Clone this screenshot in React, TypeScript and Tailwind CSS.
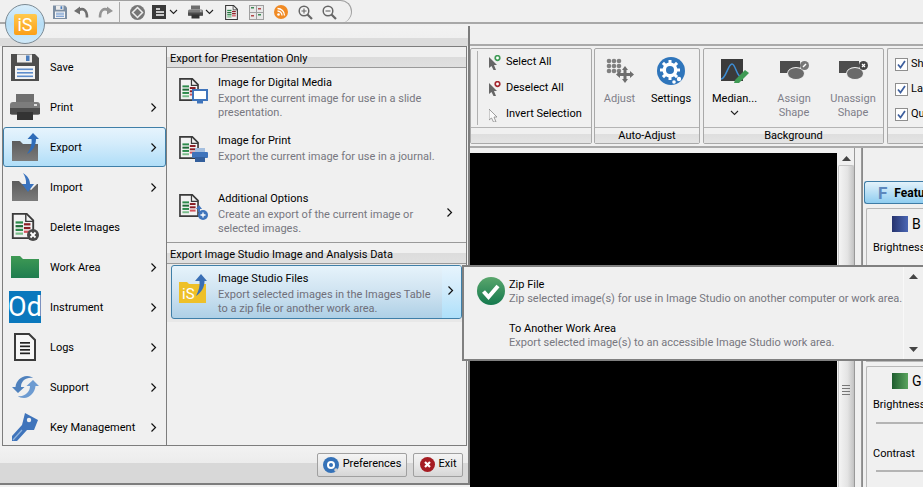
import React from "react";

const Chev = () => (
  <svg width="7" height="11" viewBox="0 0 7 11" className="shrink-0"><path d="M1.5 1.5L5.5 5.5L1.5 9.5" fill="none" stroke="#111" strokeWidth="1.2" /></svg>
);
const ChevDown = () => (
  <svg width="9" height="6" viewBox="0 0 9 6" className="shrink-0"><path d="M1 1L4.5 4.5L8 1" fill="none" stroke="#222" strokeWidth="1.1" /></svg>
);

const Floppy = ({ s = 28, dark = "#4e4e4e" }: { s?: number; dark?: string }) => (
  <svg width={s} height={s} viewBox="0 0 28 28">
    <path d="M0 1h24l4 4v23H0z" fill={dark} />
    <rect x="6" y="1.5" width="15" height="8" fill="#ececec" />
    <rect x="15" y="2.5" width="3.5" height="5.5" fill="#4a7dbd" />
    <rect x="4" y="13" width="20" height="13" fill="#f4f4f4" />
    <rect x="6" y="15.5" width="16" height="1.6" fill="#5d8ccb" />
    <rect x="6" y="19" width="16" height="1.6" fill="#5d8ccb" />
    <rect x="6" y="22.5" width="16" height="1.6" fill="#5d8ccb" />
  </svg>
);
const Printer = ({ w = 30, h = 26, c = "#4c4c4c" }: { w?: number; h?: number; c?: string }) => (
  <svg width={w} height={h} viewBox="0 0 30 26">
    <path d="M6 0h18v8H6z" fill="#6f6f6f" />
    <path d="M3 8h24q3 0 3 3v8q0 2-2 2H2q-2 0-2-2v-8q0-3 3-3z" fill="#7c7c7c" />
    <rect x="0" y="14" width="30" height="6" fill={c} />
    <rect x="7" y="18" width="16" height="8" fill="#333" />
    <rect x="24" y="10" width="3" height="2" fill="#ddd" />
  </svg>
);
const DocBars = ({ w = 24, h = 28 }: { w?: number; h?: number }) => (
  <svg width={w} height={h} viewBox="0 0 24 28">
    <path d="M1 1h15l7 7v19H1z" fill="#f2f2f2" stroke="#3a3a3a" strokeWidth="2" />
    <path d="M15 1v8h8" fill="none" stroke="#3a3a3a" strokeWidth="1.5" />
    <g fill="#2c8a4b"><rect x="4" y="9" width="8" height="2.4" /><rect x="4" y="13" width="8" height="2.4" fill="#1e6b37" /><rect x="4" y="17" width="8" height="2.4" /><rect x="4" y="21" width="8" height="2.4" fill="#7bbd8c" /></g>
    <g fill="#8a1d24"><rect x="13" y="11" width="7" height="2.4" /><rect x="13" y="15" width="7" height="2.4" /><rect x="13" y="19" width="7" height="2.4" fill="#d2545c" /></g>
  </svg>
);
const Folder = ({ fill = "#5c5c5c", notch = false }: { fill?: string; notch?: boolean }) => (
  <svg width="26" height="20" viewBox="0 0 26 20">
    <defs><linearGradient id={`f${notch ? "n" : "p"}`} x1="0" y1="0" x2="0" y2="1"><stop offset="0" stopColor={fill} /><stop offset="1" stopColor="#7b7b7b" /></linearGradient></defs>
    <path d={notch ? "M0 0h7l3 3h3l6 6 6-6h1v17H0z" : "M0 0h8l3 3h15v17H0z"} fill={`url(#f${notch ? "n" : "p"})`} />
  </svg>
);
const ExportIcon = () => (
  <div className="relative w-[26px] h-[28px]">
    <div className="absolute left-0 bottom-0 flex"><Folder /></div>
    <svg className="absolute left-[14px] top-0" width="13" height="22" viewBox="0 0 13 22">
      <path d="M7 0L13 6H10C10 12 7 18 1 21C5 15 6 11 5.500 6H1.500z" fill="#2f6cb8" />
    </svg>
  </div>
);
const ImportIcon = () => (
  <div className="relative w-[26px] h-[28px]">
    <div className="absolute left-0 bottom-0 flex"><Folder notch /></div>
    <svg className="absolute left-[9px] top-0" width="14" height="20" viewBox="0 0 14 20">
      <path d="M2 0C7 3 9 7 9 11H13L7 19L1 11H5C5.500 7 4 3 2 0z" fill="#3a73be" />
    </svg>
  </div>
);
const DeleteIcon = () => (
  <div className="relative w-[28px] h-[28px]">
    <DocBars w={24} h={26} />
    <svg className="absolute right-0 bottom-0" width="12" height="12" viewBox="0 0 12 12">
      <circle cx="6" cy="6" r="6" fill="#4a4a4a" />
      <path d="M3.500 3.500L8.500 8.500M8.500 3.500L3.500 8.500" stroke="#fff" strokeWidth="1.800" />
    </svg>
  </div>
);
const GreenFolder = () => (
  <svg width="28" height="22" viewBox="0 0 28 22">
    <defs><linearGradient id="gf" x1="0" y1="0" x2="0" y2="1"><stop offset="0" stopColor="#3f9a54" /><stop offset="1" stopColor="#1f7d50" /></linearGradient></defs>
    <path d="M0 0h9l3 3h16v19H0z" fill="url(#gf)" />
  </svg>
);
const OdIcon = () => (
  <div className="w-[32px] h-[32px] bg-[#0a78bd] text-white text-[27px] leading-[32px] flex items-center justify-center overflow-hidden">Od</div>
);
const LogsIcon = () => (
  <svg width="22" height="28" viewBox="0 0 22 28">
    <path d="M1 1h14l6 6v20H1z" fill="#f7f7f7" stroke="#3a3a3a" strokeWidth="2" />
    <g fill="#222"><rect x="6" y="9" width="10" height="1.700" /><rect x="6" y="12.500" width="10" height="1.700" /><rect x="6" y="16" width="10" height="1.700" /><rect x="6" y="19.500" width="10" height="1.700" /></g>
  </svg>
);
const SupportIcon = () => (
  <svg width="27" height="22" viewBox="0 0 27 22">
    <path d="M0 11H3.500C4 5 9 0 15 0C18 0 20 1 21 2C14 1 9 5 9 11H12.500L6 17z" fill="#4f81bd" />
    <path d="M27 10H23.500C23 16 18 22 12 22C9 22 7 21 6 20C13 21 18 16 18 10H14.500L21 4z" fill="#6d9bd1" />
  </svg>
);
const KeyIcon = () => (
  <svg width="26" height="28" viewBox="0 0 26 28">
    <path d="M13 0L26 7L22 17L15 17L5 28L0 28L0 23L10 12z" fill="#3f74bb" />
    <circle cx="17" cy="7" r="2.200" fill="#f0f0f0" />
    <path d="M1 27L10 17" stroke="#8fb3dd" strokeWidth="1.200" />
  </svg>
);

const MonitorBadge = () => (
  <svg width="16" height="15" viewBox="0 0 16 15">
    <rect x="1" y="1" width="14" height="10" fill="#fff" stroke="#3f74bb" strokeWidth="2" />
    <rect x="5" y="12" width="6" height="2.500" fill="#3f74bb" />
  </svg>
);
const PrintBadge = () => (
  <svg width="16" height="14" viewBox="0 0 16 14">
    <rect x="3" y="0" width="10" height="4" fill="#a5bfdf" />
    <rect x="0" y="4" width="16" height="6" rx="1" fill="#3f74bb" />
    <rect x="3" y="9" width="10" height="5" fill="#335f9c" />
  </svg>
);
const PlusBadge = () => (
  <svg width="12" height="15" viewBox="0 0 12 15">
    <path d="M3 0L6 4H4V7H2V4H0z" fill="#3f74bb" />
    <circle cx="7" cy="10" r="5" fill="#3f74bb" />
    <path d="M4.500 10H9.500M7 7.500V12.500" stroke="#fff" strokeWidth="1.300" />
  </svg>
);
const ExportDoc = ({ badge }: { badge: React.ReactNode }) => (
  <div className="relative w-[29px] h-[26px]">
    <DocBars w={20} h={23} />
    <div className="absolute right-0 bottom-0 flex">{badge}</div>
  </div>
);
const StudioFolder = () => (
  <div className="relative w-[27px] h-[29px]">
    <svg className="absolute left-0 bottom-0" width="27" height="21" viewBox="0 0 27 21">
      <path d="M0 0h8l2 2h17v19H0z" fill="#eec028" />
    </svg>
    <span className="absolute left-[3px] bottom-[1px] text-white text-[15px] leading-[15px]">iS</span>
    <svg className="absolute left-[16px] top-0" width="12" height="22" viewBox="0 0 12 22">
      <path d="M6 0L12 7H9.500C9.500 13 7 18 1 22C4 16 5 12 4.500 7H0z" fill="#3a6fb5" />
    </svg>
  </div>
);

const Check = () => (
  <svg width="28" height="28" viewBox="0 0 28 28">
    <defs><linearGradient id="ck" x1="0" y1="0" x2="0" y2="1"><stop offset="0" stopColor="#5aa66c" /><stop offset="1" stopColor="#14794e" /></linearGradient></defs>
    <circle cx="14" cy="14" r="14" fill="url(#ck)" />
    <path d="M6.500 14.500L11.500 20L21 9" fill="none" stroke="#fff" strokeWidth="4" />
  </svg>
);

const Orb = () => (
  <div className="absolute left-[5px] top-[4px] w-[40px] h-[40px] rounded-full border border-[#7b8a94] bg-[linear-gradient(#d9eefb,#b7def6_50%,#cfe9f9)] flex items-center justify-center">
    <div className="w-[23px] h-[21px] rounded-[2px] bg-[linear-gradient(#ffc94d,#fb9f18)] text-white text-[18px] leading-[21px] text-center">iS</div>
  </div>
);

const TB = ({ children, w = 20 }: { children: React.ReactNode; w?: number }) => (
  <div className="flex items-center justify-center shrink-0" style={{ width: w }}>{children}</div>
);

const QuickBar = () => (
  <div className="h-[24px] pl-[50px] border-b-2 border-[#a8a8a8] bg-[#f0f0f0] flex">
    <div className="w-[302px] h-[23px] rounded-r-[12px] border-r border-t border-[#a0a0a0] flex items-center pl-[1px]">
      <TB w={18}><Floppy s={14} dark="#7c8ea3" /></TB>
      <TB w={25}><svg width="15" height="13" viewBox="0 0 15 13"><path d="M5 4C9 2 13 3.500 13 11.500" fill="none" stroke="#6f6f6f" strokeWidth="2.600" /><path d="M0 5L6 0.500V8.500z" fill="#6f6f6f" /></svg></TB>
      <TB w={23}><svg width="15" height="13" viewBox="0 0 15 13"><path d="M10 4C6 2 2 3.500 2 11.500" fill="none" stroke="#959595" strokeWidth="2.600" /><path d="M15 5L9 0.500V8.500z" fill="#959595" /></svg></TB>
      <div className="w-[1px] h-[21px] bg-[#a9a9a9] ml-[2px] mr-[9px]" />
      <TB w={16}><svg width="15" height="15" viewBox="0 0 15 15"><circle cx="7.500" cy="7.500" r="7.500" fill="#777" /><path d="M7.500 2.500L12.500 7.500L7.500 12.500L2.500 7.500z" fill="none" stroke="#eee" strokeWidth="1.500" /></svg></TB>
      <div className="ml-[7px] flex items-center gap-[3px]">
        <svg width="14" height="14" viewBox="0 0 14 14"><rect width="14" height="14" fill="#3a3a3a" /><g fill="#ccc"><rect x="4" y="3" width="4" height="2" /><rect x="4" y="6" width="8" height="2" /><rect x="4" y="9" width="8" height="2" /></g></svg>
        <ChevDown />
      </div>
      <div className="ml-[10px] flex items-center gap-[2px]">
        <Printer w={15} h={14} />
        <ChevDown />
      </div>
      <div className="ml-[11px] flex"><DocBars w={13} h={15} /></div>
      <div className="ml-[11px] flex">
        <svg width="15" height="15" viewBox="0 0 15 15"><rect width="15" height="15" fill="#a0a0a0" /><g fill="#e8e8e8"><rect x="1" y="1" width="6" height="6" /><rect x="8" y="1" width="6" height="6" /><rect x="1" y="8" width="6" height="6" /><rect x="8" y="8" width="6" height="6" /></g><g fill="#3e8a55"><rect x="2" y="2" width="3" height="1.500" /><rect x="9" y="9" width="3" height="1.500" /></g><g fill="#b34a4a"><rect x="9" y="3" width="3" height="1.500" /><rect x="2" y="10" width="3" height="1.500" /></g></svg>
      </div>
      <div className="ml-[10px] flex">
        <svg width="14" height="14" viewBox="0 0 14 14"><circle cx="7" cy="7" r="7" fill="#f08a24" /><circle cx="4.500" cy="9.500" r="1.300" fill="#fff" /><path d="M3.500 6A4.500 4.500 0 0 1 8 10.500M3.500 3.500A7 7 0 0 1 10.500 10.500" fill="none" stroke="#fff" strokeWidth="1.300" /></svg>
      </div>
      <div className="ml-[10px] flex">
        <svg width="15" height="15" viewBox="0 0 15 15"><circle cx="6" cy="6" r="4.800" fill="#f4f4f4" stroke="#666" strokeWidth="1.500" /><path d="M9.500 9.500L14 14" stroke="#666" strokeWidth="2.200" /><path d="M3.500 6H8.500M6 3.500V8.500" stroke="#666" strokeWidth="1.100" /></svg>
      </div>
      <div className="ml-[9px] flex">
        <svg width="15" height="15" viewBox="0 0 15 15"><circle cx="6" cy="6" r="4.800" fill="#f4f4f4" stroke="#666" strokeWidth="1.500" /><path d="M9.500 9.500L14 14" stroke="#666" strokeWidth="2.200" /><path d="M3.500 6H8.500" stroke="#666" strokeWidth="1.100" /></svg>
      </div>
    </div>
  </div>
);

const Group = ({ label, w, children }: { label: string; w: number; children: React.ReactNode }) => (
  <div className="h-[96px] border border-[#a9a9a9] rounded-[2px] flex flex-col shrink-0" style={{ width: w }}>
    <div className="flex-1 min-h-0 flex overflow-hidden">{children}</div>
    <div className="h-[16px] border-t border-[#b4b4b4] bg-[linear-gradient(#f0f0f0,#f0f0f0_40%,#dedede_40%,#e4e4e4)] text-center leading-[15px]">{label}</div>
  </div>
);

const RibbonBtn = ({ w, icon, lines, dim, extra }: { w: number; icon: React.ReactNode; lines: string[]; dim?: boolean; extra?: React.ReactNode }) => (
  <div className="flex flex-col items-center shrink-0" style={{ width: w }}>
    <div className="h-[28px] mt-[8px] flex items-center justify-center">{icon}</div>
    <div className={`mt-[7px] text-center leading-[14px] ${dim ? "text-[#7f7f8a]" : "text-black"}`}>
      {lines.map((l) => (<div key={l}>{l}</div>))}
    </div>
    {extra}
  </div>
);

const Cursor = ({ color, dot }: { color: string; dot?: string }) => (
  <svg width="12" height="15" viewBox="0 0 12 15">
    <path d="M0 2L8 10H5L7 15L4.500 15L2.500 11L0 13z" fill={color} stroke={dot ? "none" : "#888"} strokeWidth="0.800" />
    {dot && <circle cx="8.500" cy="3" r="2.300" fill="#fff" stroke={dot} strokeWidth="1.700" />}
  </svg>
);

const SelRow = ({ icon, t }: { icon: React.ReactNode; t: string }) => (
  <div className="h-[26px] flex items-center">
    <div className="w-[27px] pl-[11px] flex">{icon}</div>
    <span className="ml-[1px] whitespace-nowrap">{t}</span>
  </div>
);

const ShapeIcon = ({ mark }: { mark: React.ReactNode }) => (
  <div className="relative w-[29px] h-[20px]">
    <div className="absolute left-0 top-0 w-[20px] h-[12px] bg-[#4d4d4d]" />
    <div className="absolute left-[7px] top-[6px] w-[18px] h-[13px] rounded-[50%] bg-[#6a6a6a] border border-[#f0f0f0]" />
    <svg className="absolute right-0 top-0" width="9" height="9" viewBox="0 0 9 9">{mark}</svg>
  </div>
);

const Ribbon = () => (
  <div className="h-[122px] bg-[#f0f0f0] pl-[470px] border-b-0">
    <div className="h-[22px] border-b-2 border-[#a9a9a9]" />
    <div className="h-[2px]" />
    <div className="flex gap-[2px]">
      <Group label="" w={122}>
        <div className="ml-[6px] my-[2px] w-[1px] bg-[#b0b0b0]" />
        <div className="flex flex-col">
          <SelRow icon={<Cursor color="#666" dot="#3e9a55" />} t="Select All" />
          <SelRow icon={<Cursor color="#666" dot="#a3262e" />} t="Deselect All" />
          <SelRow icon={<Cursor color="#fafafa" />} t="Invert Selection" />
        </div>
      </Group>
      <Group label="Auto-Adjust" w={106}>
        <div className="pl-[2px] flex">
          <RibbonBtn w={45} dim lines={["Adjust"]} icon={
            <svg width="28" height="26" viewBox="0 0 28 26">
              <g fill="#808080">{[0, 5, 10].map((x) => [0, 5, 10].map((y) => <circle key={`${x}${y}`} cx={x + 3} cy={y + 3} r="2.300" />))}</g>
              <path d="M19 8L22 12H20.500V15H24V13L28 16.500L24 20V18H20.500V21H22L19 25L16 21H17.500V18H14V20L10 16.500L14 13V15H17.500V12H16z" fill="#6d6d6d" />
            </svg>
          } />
          <RibbonBtn w={58} lines={["Settings"]} icon={
            <svg width="28" height="28" viewBox="0 0 28 28">
              <circle cx="14" cy="14" r="14" fill="#2f75bb" />
              <circle cx="13" cy="13" r="7.500" fill="#fff" />
              <g stroke="#fff" strokeWidth="3">{[0, 45, 90, 135].map((a) => <path key={a} d="M13 3V23" transform={`rotate(${a} 13 13)`} />)}</g>
              <circle cx="13" cy="13" r="4" fill="#2f75bb" />
              <circle cx="22" cy="22" r="2.200" fill="#fff" />
              <circle cx="17" cy="25" r="1.800" fill="#fff" />
            </svg>
          } />
        </div>
      </Group>
      <div className="ml-[1px]">
        <Group label="Background" w={181}>
          <div className="pl-[3px] flex">
            <RibbonBtn w={55} lines={["Median..."]} icon={
              <svg width="28" height="24" viewBox="0 0 28 24">
                <rect width="22" height="22" fill="#3b3b3b" />
                <path d="M0 20C5 20 7 5 11 5C15 5 15 19 22 19" fill="none" stroke="#3e8fd6" strokeWidth="1.500" />
                <path d="M14 21L24 11L28 14L18 24L13 24z" fill="#3f9a54" />
              </svg>
            } extra={<div className="mt-[4px] flex"><ChevDown /></div>} />
            <div className="ml-[1px] flex">
              <RibbonBtn w={62} dim lines={["Assign", "Shape"]} icon={<ShapeIcon mark={<><circle cx="4.500" cy="4.500" r="4.500" fill="#777" /><path d="M3 6L6 3" stroke="#fff" strokeWidth="1.500" /></>} />} />
              <RibbonBtn w={56} dim lines={["Unassign", "Shape"]} icon={<ShapeIcon mark={<><circle cx="4.500" cy="4.500" r="4.500" fill="#444" /><path d="M3 3L6 6M6 3L3 6" stroke="#fff" strokeWidth="1.200" /></>} />} />
            </div>
          </div>
        </Group>
      </div>
      <div className="ml-[1px] flex-1 min-w-0">
        <div className="h-[96px] border border-r-0 border-[#a9a9a9] rounded-l-[2px] flex flex-col">
          <div className="flex-1 pl-[7px] pt-[3px] overflow-hidden">
            {["Show", "Labels", "Quality"].map((t) => (
              <div key={t} className="h-[25px] flex items-center gap-[3px]">
                <div className="w-[13px] h-[13px] border border-[#8e8e8e] bg-white flex items-center justify-center shrink-0">
                  <svg width="9" height="9" viewBox="0 0 9 9"><path d="M1 4.500L3.500 7.500L8 1" fill="none" stroke="#3d5f9e" strokeWidth="1.700" /></svg>
                </div>
                <span className="whitespace-nowrap">{t}</span>
              </div>
            ))}
          </div>
          <div className="h-[16px] border-t border-[#b4b4b4] bg-[linear-gradient(#f0f0f0,#f0f0f0_40%,#dedede_40%,#e4e4e4)]" />
        </div>
      </div>
    </div>
  </div>
);

const SwatchHead = ({ from, to, t }: { from: string; to: string; t: string }) => (
  <div className="flex items-center gap-[4px] pl-[25px]">
    <div className="w-[16px] h-[16px]" style={{ background: `linear-gradient(90deg, ${from}, ${to})` }} />
    <span className="text-[14px] leading-[16px]">{t}</span>
  </div>
);

const RightPanel = () => (
  <div className="flex-1 min-w-0 border-l border-[#8a8a8a] pl-[1px] pt-[33px] bg-[#f0f0f0] overflow-hidden">
    <div className="h-[23px] rounded-l-[3px] border border-r-0 border-[#3e7ca6] bg-[linear-gradient(#e3f2fb,#8fcdf0)] flex items-center pl-[13px] gap-[7px] whitespace-nowrap">
      <span className="text-[#5c87bd] text-[17px] font-bold leading-[20px]">F</span>
      <span className="font-bold text-[12px]">Features</span>
    </div>
    <div className="ml-[2px] mt-[4px] h-[154px] border border-r-0 border-[#b8b8b8] rounded-tl-[2px] pt-[7px]">
      <SwatchHead from="#26336e" to="#4a66b4" t="B" />
      <div className="pl-[6px] mt-[8px] leading-[16px]">Brightness</div>
    </div>
    <div className="ml-[2px] mt-[4px] border border-r-0 border-[#b8b8b8] rounded-tl-[2px] pt-[6px] h-[200px]">
      <SwatchHead from="#1e5c2e" to="#5aa45e" t="G" />
      <div className="pl-[6px] mt-[8px] leading-[16px]">Brightness</div>
      <div className="ml-[9px] mt-[9px] h-[2px] bg-[#b4b4b4]" />
      <div className="pl-[6px] mt-[22px] leading-[16px]">Contrast</div>
      <div className="ml-[9px] mt-[8px] h-[2px] bg-[#b4b4b4]" />
    </div>
  </div>
);

const Main = () => (
  <div className="flex-1 min-h-0 flex pl-[470px] bg-[#f0f0f0] border-t-2 border-[#a9a9a9]">
    <div className="w-[367px] mt-[5px] bg-black" />
    <div className="w-[16px] mt-[5px] ml-[1px] flex flex-col items-center">
      <svg className="mt-[3px] mb-[4px]" width="9" height="5" viewBox="0 0 9 5"><path d="M4.500 0L9 5H0z" fill="#444" /></svg>
      <div className="w-full flex-1 rounded-t-[2px] border border-b-0 border-[#c4c4c4] bg-[linear-gradient(90deg,#f4f4f4,#e4e4e4_60%,#c8c8c8)] flex flex-col items-center justify-center gap-[2px]">
        <div className="h-[124px]" />
        <div className="w-[8px] h-[1px] bg-[#777]" /><div className="w-[8px] h-[1px] bg-[#777]" /><div className="w-[8px] h-[1px] bg-[#777]" /><div className="w-[8px] h-[1px] bg-[#777]" />
      </div>
    </div>
    <div className="w-[8px] border-x border-[#999]" />
    <RightPanel />
  </div>
);

const MenuRow = ({ icon, t, sub, sel }: { icon: React.ReactNode; t: string; sub?: boolean; sel?: boolean }) => (
  <div className={`h-[40px] flex items-center pr-[8px] rounded-[3px] ${sel ? "border border-[#3f7fa8] bg-[linear-gradient(#e6f4fd,#d4ecfb_40%,#b0def8)]" : "border border-transparent"}`}>
    <div className="w-[46px] flex justify-center pr-[4px] shrink-0">{icon}</div>
    <span className="flex-1 whitespace-nowrap pt-[2px]">{t}</span>
    {sub && <Chev />}
  </div>
);

const Head = ({ t }: { t: string }) => (
  <div className="h-[21px] pl-[3px] pt-[2px] border-b border-[#9a9a9a] bg-[linear-gradient(#f0f0f0,#f0f0f0_50%,#dcdcdc_50%,#e0e0e0)] leading-[19px]">{t}</div>
);

const ExportRow = ({ icon, t, d, sub }: { icon: React.ReactNode; t: string; d: string[]; sub?: boolean }) => (
  <div className="h-[58px] flex pl-[12px] pr-[13px] pt-[6px]">
    <div className="w-[39px] pt-[4px] shrink-0 flex items-start">{icon}</div>
    <div className="flex-1 leading-[14px] pt-[2px]">
      <div className="mb-[2px]">{t}</div>
      {d.map((l) => <div key={l} className="text-[#77777f] whitespace-nowrap">{l}</div>)}
    </div>
    {sub && <div className="self-center flex pb-[8px]"><Chev /></div>}
  </div>
);

const Btn = ({ icon, t, w }: { icon: React.ReactNode; t: string; w: number }) => (
  <div className="h-[24px] rounded-[2px] border border-[#a0a0a0] bg-[linear-gradient(#f4f4f4,#e8e8e8_50%,#d6d6d6)] flex items-center justify-center gap-[4px]" style={{ width: w }}>
    {icon}<span>{t}</span>
  </div>
);

const Menu = () => (
  <div className="absolute left-0 top-[26px] w-[470px] h-[459px] flex flex-col bg-[#f0f0f0] border-r-2 border-b-2 border-[#7d7d7d]">
    <div className="h-[20px] shrink-0 bg-[linear-gradient(#f2f2f2,#f0f0f0_58%,#dcdcdc_58%,#dcdcdc)]" />
    <div className="flex-1 min-h-0 ml-[2px] mr-[1px] border border-[#7d7d7d] flex">
      <div className="w-[164px] shrink-0 border-r border-[#7d7d7d]">
        {[
          { i: <Floppy />, t: "Save" },
          { i: <Printer />, t: "Print", s: true },
          { i: <ExportIcon />, t: "Export", s: true, sel: true },
          { i: <ImportIcon />, t: "Import", s: true },
          { i: <DeleteIcon />, t: "Delete Images" },
          { i: <GreenFolder />, t: "Work Area", s: true },
          { i: <OdIcon />, t: "Instrument", s: true },
          { i: <LogsIcon />, t: "Logs", s: true },
          { i: <SupportIcon />, t: "Support", s: true },
          { i: <KeyIcon />, t: "Key Management", s: true },
        ].map((r) => <MenuRow key={r.t} icon={r.i} t={r.t} sub={r.s} sel={r.sel} />)}
      </div>
      <div className="flex-1 min-w-0">
        <Head t="Export for Presentation Only" />
        <ExportRow icon={<ExportDoc badge={<MonitorBadge />} />} t="Image for Digital Media" d={["Export the current image for use in a slide", "presentation."]} />
        <ExportRow icon={<ExportDoc badge={<PrintBadge />} />} t="Image for Print" d={["Export the current image for use in a journal."]} />
        <ExportRow icon={<ExportDoc badge={<PlusBadge />} />} t="Additional Options" d={["Create an export of the current image or", "selected images."]} sub />
        <div className="border-t border-[#9a9a9a]"><Head t="Export Image Studio Image and Analysis Data" /></div>
        <div className="px-[4px] py-[1px] bg-[#e8e8e8] h-[58px]">
          <div className="h-[54px] rounded-[3px] border border-[#3f7fa8] overflow-hidden bg-[linear-gradient(#e6f3fb,#cfe3f1_50%,#aed0e6)] flex pl-[7px]">
            <div className="w-[39px] pt-[8px] shrink-0 flex items-start"><StudioFolder /></div>
            <div className="flex-1 leading-[14px] pt-[6px]">
              <div className="mb-[2px]">Image Studio Files</div>
              <div className="text-[#6f6f7a] whitespace-nowrap">Export selected images in the Images Table</div>
              <div className="text-[#6f6f7a] whitespace-nowrap">to a zip file or another work area.</div>
            </div>
            <div className="w-[19px] bg-[linear-gradient(#e6f4fd,#d4ecfb_40%,#aee0fa)] flex items-center pl-[5px] pb-[3px]"><Chev /></div>
          </div>
        </div>
      </div>
    </div>
    <div className="h-[37px] shrink-0 bg-[linear-gradient(#f2f2f2,#ececec_45%,#d8d8d8_45%,#d8d8d8)] flex items-center justify-end gap-[6px] pr-[5px]">
      <Btn w={90} t="Preferences" icon={
        <svg width="16" height="16" viewBox="0 0 16 16"><circle cx="8" cy="8" r="8" fill="#3572b8" /><circle cx="8" cy="8" r="4" fill="#fff" /><circle cx="8" cy="8" r="2" fill="#3572b8" /><circle cx="13" cy="13" r="1.800" fill="#d0d0d0" /></svg>
      } />
      <Btn w={50} t="Exit" icon={
        <svg width="15" height="15" viewBox="0 0 15 15"><circle cx="7.500" cy="7.500" r="7.500" fill="#a51c22" /><path d="M5 5L10 10M10 5L5 10" stroke="#fff" strokeWidth="2.200" /></svg>
      } />
    </div>
  </div>
);

const Popup = () => (
  <div className="absolute left-[462px] top-[265px] w-[461px] h-[96px] border-2 border-r-0 border-[#808080] bg-[#f0f0f0] flex">
    <div className="flex-1 pt-[11px] flex flex-col gap-[16px] leading-[14px]">
      <div className="relative pl-[45px]">
        <div className="absolute left-[13px] top-[-1px] flex"><Check /></div>
        <div>Zip File</div>
        <div className="text-[#77777f] whitespace-nowrap">Zip selected image(s) for use in Image Studio on another computer or work area.</div>
      </div>
      <div className="pl-[45px]">
        <div>To Another Work Area</div>
        <div className="text-[#77777f] whitespace-nowrap">Export selected image(s) to an accessible Image Studio work area.</div>
      </div>
    </div>
    <div className="w-[20px] border-l border-[#f8f8f8] flex flex-col items-center justify-between py-[7px]">
      <svg width="9" height="5" viewBox="0 0 9 5"><path d="M4.500 0L9 5H0z" fill="#444" /></svg>
      <svg width="9" height="5" viewBox="0 0 9 5"><path d="M4.500 5L9 0H0z" fill="#444" /></svg>
    </div>
  </div>
);

export default function App() {
  return (
    <div className="relative w-[923px] h-[487px] overflow-hidden flex flex-col bg-[#f0f0f0] text-black text-[11px] font-['Roboto','Noto_Sans',sans-serif]">
      <QuickBar />
      <Ribbon />
      <Main />
      <Menu />
      <Orb />
      <Popup />
    </div>
  );
}
